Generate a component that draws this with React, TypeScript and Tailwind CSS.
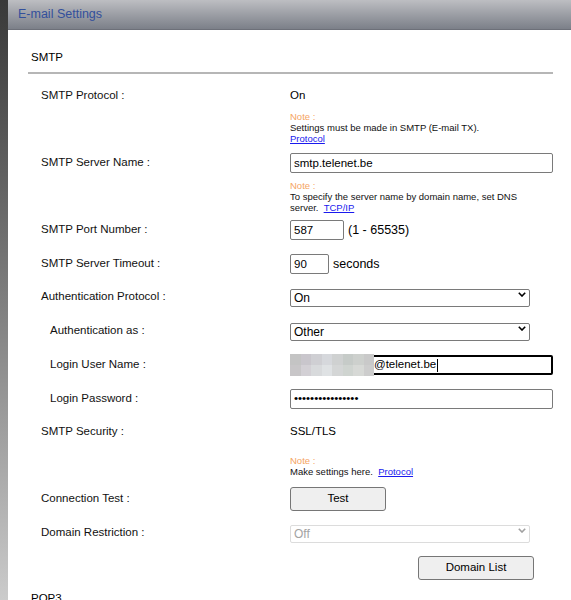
import React from 'react'

const font = { fontFamily: '"Liberation Sans", Arial, sans-serif' }

function Label({ text, indent }: { text: string; indent?: boolean }) {
  return (
    <div className={`w-[249px] shrink-0 text-[11.5px] text-[#111] ${indent ? 'pl-[9px]' : ''}`}>
      {text}
    </div>
  )
}

function Row({ label, indent, className, children }: { label: string; indent?: boolean; className: string; children: React.ReactNode }) {
  return (
    <div className={`flex items-center pl-[13px] ${className}`}>
      <Label text={label} indent={indent} />
      <div className="flex flex-1 items-center">{children}</div>
    </div>
  )
}

function Note({ className, children }: { className: string; children: React.ReactNode }) {
  return (
    <div className={`pl-[262px] ${className}`}>
      <div className="w-[250px] text-[9.5px] leading-[11px] text-[#111]">
        <div className="text-[#f5a462]">Note :</div>
        {children}
      </div>
    </div>
  )
}

function Link({ children }: { children: React.ReactNode }) {
  return <a href="#" className="text-[#1a1aee] underline">{children}</a>
}

function Select({ value, disabled }: { value: string; disabled?: boolean }) {
  return (
    <div className="relative w-[240px]">
      <select
        disabled={disabled}
        defaultValue={value}
        className={`h-[18px] w-full appearance-none rounded-[2px] border pl-[3px] text-[12px] leading-[16px] outline-none ${
          disabled ? 'border-[#dcdcdc] bg-white text-[#a3a3a3]' : 'border-[#7a7a7a] bg-white text-black'
        }`}
        style={font}
      >
        <option>{value}</option>
      </select>
      <svg width="8" height="5" viewBox="0 0 8 5" className="pointer-events-none absolute right-[4px] top-[7px]">
        <path d="M0.8 0.8 L4 4 L7.2 0.8" fill="none" stroke={disabled ? '#a0a0a0' : '#000'} strokeWidth="1.6" />
      </svg>
    </div>
  )
}

function Button({ text, className }: { text: string; className: string }) {
  return (
    <button
      className={`h-[24px] rounded-[3px] border border-[#767676] bg-[#efefef] text-[11.5px] text-black ${className}`}
      style={font}
    >
      {text}
    </button>
  )
}

const blur = [
  '#c4c4c4', '#c9c6cc', '#cfcfd3', '#d6d8dc', '#cfd1d1', '#c6cbc8', '#cdd0cd', '#c9c9c9',
  '#c8c6c8', '#d3d0d5', '#d8dadc', '#dfe2e4', '#d4d6d6', '#cfd4d0', '#d7d9d6', '#cdcdcd',
]

export default function App() {
  return (
    <div className="flex h-[600px] w-[571px] overflow-hidden bg-white" style={font}>
      <div className="w-[8px] shrink-0 bg-gradient-to-b from-[#393939] to-[#cbcbcb]" />
      <div className="flex-1">
        <div className="flex h-[30px] items-center border-b border-[#6d7079] bg-gradient-to-b from-[#bdbec2] to-[#7c8089] pl-[10px]">
          <span className="text-[12.5px] text-[#33509c]">E-mail Settings</span>
        </div>

        <div className="pl-[20px] pr-[18px]">
          <div className="border-b-2 border-[#b6b6b6] pb-[8px] pl-[3px] pt-[21px] text-[11.5px] leading-[13px] text-black">
            SMTP
          </div>

          <Row label="SMTP Protocol :" className="mt-[12px] h-[20px]">
            <span className="text-[11.5px]">On</span>
          </Row>
          <Note className="mt-[5px]">
            <div>Settings must be made in SMTP (E-mail TX).</div>
            <Link>Protocol</Link>
          </Note>

          <Row label="SMTP Server Name :" className="mt-[9px] h-[20px]">
            <input
              readOnly
              value="smtp.telenet.be"
              className="h-[20px] w-[263px] rounded-[2px] border border-[#7a7a7a] px-[3px] text-[11.5px] outline-none"
              style={font}
            />
          </Row>
          <Note className="mt-[7px]">
            To specify the server name by domain name, set DNS server.&nbsp; <Link>TCP/IP</Link>
          </Note>

          <Row label="SMTP Port Number :" className="mt-[7px] h-[20px]">
            <input
              readOnly
              value="587"
              className="h-[20px] w-[54px] rounded-[2px] border border-[#7a7a7a] px-[3px] text-[11.5px] outline-none"
              style={font}
            />
            <span className="ml-[4px] text-[12.5px]">(1 - 65535)</span>
          </Row>

          <Row label="SMTP Server Timeout :" className="mt-[14px] h-[20px]">
            <input
              readOnly
              value="90"
              className="h-[20px] w-[39px] rounded-[2px] border border-[#7a7a7a] px-[3px] text-[11.5px] outline-none"
              style={font}
            />
            <span className="ml-[4px] text-[12.5px]">seconds</span>
          </Row>

          <Row label="Authentication Protocol :" className="mt-[13px] h-[20px]">
            <Select value="On" />
          </Row>

          <Row label="Authentication as :" indent className="mt-[14px] h-[20px]">
            <Select value="Other" />
          </Row>

          <Row label="Login User Name :" indent className="mt-[14px] h-[20px]">
            <div className="relative">
              <div className="flex h-[20px] w-[263px] items-center rounded-[2px] border-2 border-black pl-[82px] text-[11.5px]">
                <span>@telenet.be</span>
                <span className="ml-[1px] h-[13px] w-[1px] bg-black" />
              </div>
              <div className="absolute -top-[1px] left-0 grid h-[22px] w-[84px] grid-cols-8 grid-rows-2 bg-[#c6c6c6]">
                {blur.map((c, i) => (
                  <div key={i} style={{ backgroundColor: c }} />
                ))}
              </div>
            </div>
          </Row>

          <Row label="Login Password :" indent className="mt-[14px] h-[20px]">
            <div className="flex h-[20px] w-[263px] items-center rounded-[2px] border border-[#7a7a7a] pl-[3px] text-[11.5px]">
              ••••••••••••••••
            </div>
          </Row>

          <Row label="SMTP Security :" className="mt-[13px] h-[20px]">
            <span className="text-[11.5px]">SSL/TLS</span>
          </Row>
          <Note className="mt-[13px]">
            Make settings here.&nbsp; <Link>Protocol</Link>
          </Note>

          <Row label="Connection Test :" className="mt-[10px] h-[24px]">
            <Button text="Test" className="w-[96px]" />
          </Row>

          <Row label="Domain Restriction :" className="mt-[12px] h-[20px]">
            <Select value="Off" disabled />
          </Row>

          <div className="mt-[11px] pl-[390px]">
            <Button text="Domain List" className="w-[116px]" />
          </div>

          <div className="mt-[12px] pl-[3px] text-[11.5px] leading-[13px] text-black">POP3</div>
        </div>
      </div>
    </div>
  )
}
